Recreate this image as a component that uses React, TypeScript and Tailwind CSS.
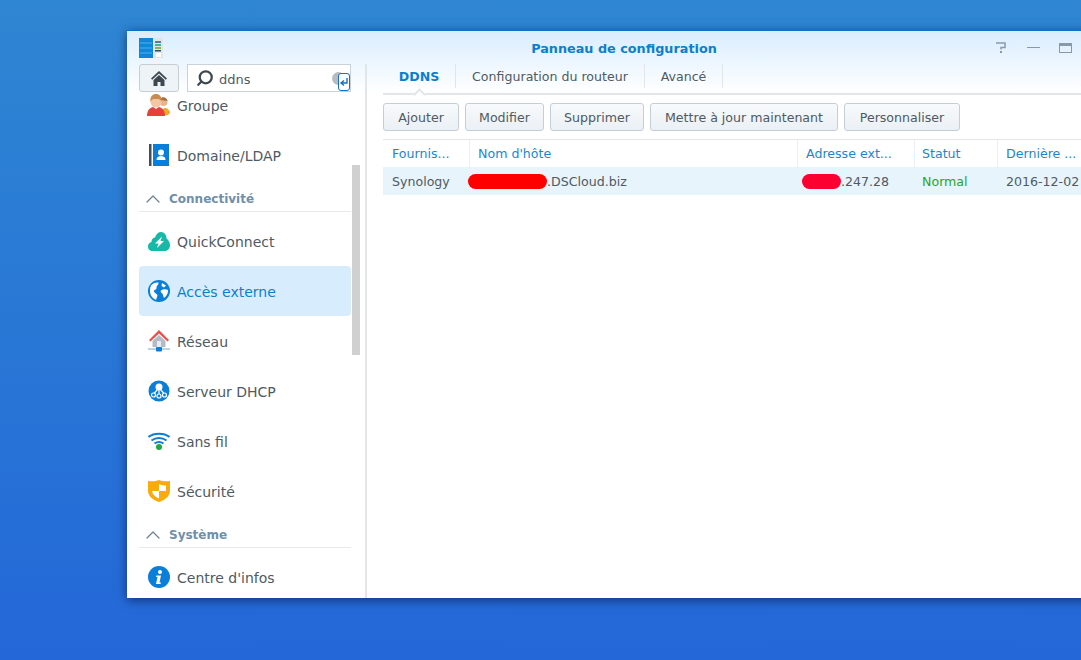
import { ChevronUp, Search } from "lucide-react";
import type { ReactNode } from "react";

const font = "font-['DejaVu_Sans','Liberation_Sans',sans-serif]";

function GroupIcon() {
  return (
    <svg viewBox="0 0 24 22" className="h-[22px] w-[24px]">
      <circle cx="16.500" cy="8" r="4" fill="#e8b48e" />
      <path d="M13 5c2-3 7-2 7.500 2-2-.5-5-.5-7.500-2z" fill="#a87038" />
      <path d="M15 21c0-4 1-7 3-7s5 2 5 5l-2 2z" fill="#eeaa20" />
      <circle cx="9" cy="8" r="5.500" fill="#f4c7a4" />
      <path d="M3.500 8C2.500 2.500 6 0 9 0s6.500 2.500 5.500 8c-1-2.500-2-3-5.500-3s-4.500.5-5.500 3z" fill="#c98c50" />
      <path d="M0 22c0-5 2-8 6-9l3 2 3-2c4 1 6 4 6 9z" fill="#e5403a" />
    </svg>
  );
}

function DomainIcon() {
  return (
    <svg viewBox="0 0 20 22" className="h-[22px] w-[20px]">
      <rect x="0" y="0" width="2.500" height="22" fill="#3f4f5f" />
      <rect x="4" y="0" width="16" height="22" fill="#0a7fd9" />
      <circle cx="12" cy="8.500" r="3" fill="#fff" />
      <path d="M7.500 16c0-3 2-4 4.500-4s4.500 1 4.500 4z" fill="#fff" />
    </svg>
  );
}

function CloudIcon() {
  return (
    <svg viewBox="0 0 22 19" className="h-[19px] w-[22px]">
      <path d="M4.500 19C1 19 0 16.500 0 14.500 0 12 1.500 10.500 3.500 10 3.500 6.500 6 5.500 7 5.500 8 2 10.500 0 13 0c3.500 0 5.500 3 5.500 6.500C20.500 8 22 10.500 22 13c0 3.500-2 6-5.500 6z" fill="#16b8a8" />
      <path d="M14 4.500l-7 7h3.500L9 16l7-7h-3.500z" fill="#fff" />
    </svg>
  );
}

function GlobeIcon() {
  return (
    <svg viewBox="0 0 22 22" className="h-[22px] w-[22px]">
      <circle cx="11" cy="11" r="11" fill="#0a7fd9" />
      <path d="M3 5.500C5 3 8 2 10.500 2.500c.5 2-2 3-2 5.500s-2.500 1-2.500 3 3 2.500 3.500 4.500L8 20C4.500 18.500 2 15 2 11c0-2 .3-4 1-5.500z" fill="#fff" />
      <path d="M13 10.500c2-1.500 5-1.500 7-.5.3 3-1.500 6.500-4 8-1-2-.8-3.500-1.800-4.500s-2.200-2-1.200-3z" fill="#fff" />
      <path d="M14 3l4 2.500-2 2-2.500-1.500z" fill="#fff" />
    </svg>
  );
}

function NetworkIcon() {
  return (
    <svg viewBox="0 0 22 22" className="h-[22px] w-[22px]">
      <path d="M11 0L1 10l1.500 1.500L11 3.500l8.500 8L21 10z" fill="#e8504a" />
      <path d="M4.500 11L11 5l6.500 6v6h-13z" fill="#b3bcc6" />
      <rect x="9" y="11" width="4" height="6" fill="#e9edf1" />
      <rect x="0" y="18.500" width="22" height="1" fill="#7fa8c8" />
      <rect x="8" y="17" width="6" height="4.500" rx="1" fill="#0a7fd9" />
    </svg>
  );
}

function DhcpIcon() {
  return (
    <svg viewBox="0 0 22 22" className="h-[22px] w-[22px]">
      <circle cx="11" cy="11" r="10.500" fill="#0a7fd9" />
      <circle cx="11" cy="7" r="3.500" fill="#fff" />
      <path d="M11 9v5M9.500 9.500L6 13.500M12.500 9.500L16 13.500" stroke="#fff" strokeWidth="1.200" />
      <circle cx="5.500" cy="15" r="2" fill="none" stroke="#fff" strokeWidth="1.200" />
      <circle cx="11" cy="16" r="2" fill="none" stroke="#fff" strokeWidth="1.200" />
      <circle cx="16.500" cy="15" r="2" fill="none" stroke="#fff" strokeWidth="1.200" />
    </svg>
  );
}

function WifiIcon() {
  return (
    <svg viewBox="0 0 22 18" className="h-[18px] w-[22px]">
      <path d="M.500 5C6 .5 16 .5 21.500 5M3.500 8.500c4.500-3.500 10.500-3.500 15 0M6.500 11.500c3-2 6-2 9 0" fill="none" stroke="#0a7fd9" strokeWidth="2" />
      <circle cx="11" cy="15" r="3" fill="#1fa83c" />
    </svg>
  );
}

function ShieldIcon() {
  return (
    <svg viewBox="0 0 22 22" className="h-[22px] w-[22px]">
      <path d="M0 1C4 1.500 8 1.500 11 0c3 1.500 7 1.500 11 1v10c0 5-5 9-11 11C5 20 0 16 0 11z" fill="#f9ab0c" />
      <path d="M11 4c2 1 5 1.500 7 1.500V11h-7zM11 11v7.500C7.500 17 4.500 14.500 4 11z" fill="#fff" />
    </svg>
  );
}

function InfoIcon() {
  return (
    <svg viewBox="0 0 22 22" className="h-[22px] w-[22px]">
      <circle cx="11" cy="11" r="11" fill="#0a7fd9" />
      <circle cx="12" cy="6" r="2" fill="#fff" />
      <path d="M8.500 9.500h4.500l-1.500 7h1.500l-.5 1.500H8l1.500-7H8z" fill="#fff" />
    </svg>
  );
}

function HomeIcon() {
  return (
    <svg viewBox="0 0 16 15" className="h-[15px] w-[16px]">
      <path d="M8 0L0 7.500l1.200 1.200L8 2.500l6.800 6.200L16 7.500z" fill="#3c4750" />
      <path d="M8 4l-5.500 5v6h4v-4h3v4h4V9z" fill="#3c4750" />
    </svg>
  );
}

function EnterIcon() {
  return (
    <svg viewBox="0 0 10 10" className="h-[10px] w-[10px]">
      <path d="M8 1v5H3M5 3.500L2 6l3 2.500" fill="none" stroke="#1a6fc0" strokeWidth="1.400" />
    </svg>
  );
}

function HelpIcon() {
  return (
    <svg viewBox="0 0 10 11" className="h-[11px] w-[10px]">
      <path d="M0 1h9v4.500H5v2" fill="none" stroke="#8a99a6" strokeWidth="1.500" />
      <rect x="4" y="9" width="2" height="2" fill="#8a99a6" />
    </svg>
  );
}

function AppLogo() {
  return (
    <svg viewBox="0 0 24 20" className="h-[20px] w-[24px]">
      <rect x="0" y="0" width="14" height="20" fill="#0f86d8" />
      <path d="M1 5h12M1 10h12M1 15h12" stroke="#4fb0ec" strokeWidth="1" />
      <rect x="14" y="0" width="10" height="20" fill="#dfe6ea" />
      <rect x="16" y="3" width="6" height="2" fill="#5b7d99" />
      <rect x="16" y="6" width="6" height="2" fill="#3fb5a0" />
      <rect x="16" y="9" width="6" height="2" fill="#7dbb4f" />
      <rect x="16" y="12" width="6" height="1.500" fill="#33495c" />
      <rect x="17" y="15" width="5" height="4" fill="#fff" />
    </svg>
  );
}

function NavItem({ icon, label, active }: { icon: ReactNode; label: string; active?: boolean }) {
  return (
    <div
      className={`flex h-[50px] items-center rounded-[4px] ${active ? "bg-[#d7ecfc] text-[#0a7fd0]" : "text-[#4f5a63]"}`}
    >
      <div className="flex w-[38px] shrink-0 justify-center pl-[2px]">{icon}</div>
      <span className="pt-[2px] text-[14px]">{label}</span>
    </div>
  );
}

function NavSection({ label }: { label: string }) {
  return (
    <div className="mb-[4px] flex h-[32px] items-center gap-[4px] border-b border-[#e6eaed] pl-[2px] pt-[7px]">
      <ChevronUp className="h-[24px] w-[24px] text-[#6f8394]" strokeWidth={1.300} />
      <span className="text-[12px] font-bold text-[#6f8fab]">{label}</span>
    </div>
  );
}

function ActionButton({ label, width }: { label: string; width: string }) {
  return (
    <button
      className={`h-[28px] rounded-[3px] border border-[#c6ced5] bg-gradient-to-b from-[#f8fafc] to-[#eaf0f5] pt-[2px] text-center text-[12.600px] text-[#4f5a63] ${width}`}
    >
      {label}
    </button>
  );
}

const columns = [
  { label: "Fournis...", cls: "w-[87px] pl-[9px]" },
  { label: "Nom d'hôte", cls: "w-[328px] pl-[8px]" },
  { label: "Adresse ext...", cls: "w-[117px] pl-[8px]" },
  { label: "Statut", cls: "w-[83px] pl-[7px]" },
  { label: "Dernière ...", cls: "w-[120px] pl-[8px]" },
];

export default function App() {
  return (
    <div
      className={`h-screen w-full overflow-hidden bg-gradient-to-b from-[#2f86d2] to-[#2467d8] pl-[127px] pt-[30px] ${font}`}
    >
      <div className="relative flex h-[568px] w-[1000px] flex-col border-t border-[#0f6fc4] bg-white shadow-[0_2px_10px_rgba(0,0,40,0.55)]">
        {/* Gradient behind title and tabs */}
        <div className="absolute inset-x-0 top-0 h-[62px] bg-gradient-to-b from-[#d9edfe] to-white" />

        {/* Title bar */}
        <div className="relative flex h-[33px] shrink-0 items-center pl-[12px]">
          <AppLogo />
          <div className="w-[917px] pl-[5px] pt-[3px] text-center text-[12.800px] font-bold text-[#0a7fd0]">
            Panneau de configuration
          </div>
          <div className="absolute left-[869px] top-[11px] flex items-center">
            <HelpIcon />
            <span className="ml-[21px] h-[1.500px] w-[13px] bg-[#8a99a6]" />
            <span className="ml-[19px] h-[10px] w-[13px] border border-t-[3px] border-[#8a99a6]" />
          </div>
        </div>

        <div className="relative flex min-h-0 flex-1">
          {/* Sidebar */}
          <aside className="relative flex w-[240px] shrink-0 flex-col border-r-2 border-[#e3e6e9] pl-[12px] pr-[14px]">
            <div className="relative z-10 flex h-[30px] shrink-0 gap-[8px]">
              <div className="flex h-[28px] w-[40px] items-center justify-center rounded-[3px] border border-[#c6ced5] bg-[#eef3f7]">
                <HomeIcon />
              </div>
              <div className="relative flex h-[28px] w-[164px] items-center border border-[#c9d2da] bg-white pl-[8px]">
                <Search className="h-[18px] w-[18px] -scale-x-100 text-[#3c4750]" strokeWidth={3} />
                <span className="ml-[5px] pt-[3px] text-[13px] text-[#4f5a63]">ddns</span>
                <span className="absolute right-[5px] top-[7px] h-[13px] w-[13px] rounded-full bg-[#b5bcc2]" />
                <span className="absolute right-0 top-[8px] flex h-[18px] w-[12px] items-center justify-center rounded-[3px] border border-[#1a6fc0] bg-white">
                  <EnterIcon />
                </span>
              </div>
            </div>
            <div className="min-h-0 flex-1 overflow-hidden">
              <div className="-mt-[14px]">
                <NavItem icon={<GroupIcon />} label="Groupe" />
                <NavItem icon={<DomainIcon />} label="Domaine/LDAP" />
                <NavSection label="Connectivité" />
                <NavItem icon={<CloudIcon />} label="QuickConnect" />
                <NavItem icon={<GlobeIcon />} label="Accès externe" active />
                <NavItem icon={<NetworkIcon />} label="Réseau" />
                <NavItem icon={<DhcpIcon />} label="Serveur DHCP" />
                <NavItem icon={<WifiIcon />} label="Sans fil" />
                <NavItem icon={<ShieldIcon />} label="Sécurité" />
                <NavSection label="Système" />
                <NavItem icon={<InfoIcon />} label="Centre d'infos" />
              </div>
            </div>
            {/* Scrollbar thumb */}
            <div className="absolute left-[225px] top-[101px] h-[190px] w-[8px] bg-[#d0d0d0]" />
          </aside>

          {/* Content */}
          <main className="flex min-w-0 flex-1 flex-col pl-[16px] text-[12.600px]">
            <div className="relative flex h-[31px] shrink-0 items-start border-b-2 border-[#e3e6e9]">
              <div className="flex h-[24px] w-[73px] items-center justify-center border-r border-[#e3e6e9] pt-[2px] font-bold text-[#0a7fd0]">
                DDNS
              </div>
              <div className="flex h-[24px] w-[189px] items-center justify-center border-r border-[#e3e6e9] pt-[2px] text-[#4f5a63]">
                Configuration du routeur
              </div>
              <div className="flex h-[24px] w-[78px] items-center justify-center border-r border-[#e3e6e9] pt-[2px] text-[#4f5a63]">
                Avancé
              </div>
              <span className="absolute bottom-[-6px] left-[32px] h-[9px] w-[9px] rotate-45 border-l-2 border-t-2 border-[#e3e6e9] bg-white" />
            </div>
            <div className="flex gap-[6px] pt-[8px]">
              <ActionButton label="Ajouter" width="w-[76px]" />
              <ActionButton label="Modifier" width="w-[79px]" />
              <ActionButton label="Supprimer" width="w-[94px]" />
              <ActionButton label="Mettre à jour maintenant" width="w-[188px]" />
              <ActionButton label="Personnaliser" width="w-[116px]" />
            </div>
            <div className="mt-[8px] flex h-[28px] w-[735px] items-center border-t border-[#e3e6e9]">
              {columns.map((col) => (
                <div
                  key={col.label}
                  className={`flex h-full shrink-0 items-center whitespace-nowrap border-r border-[#eceff1] pt-[2px] text-[#1a86d0] ${col.cls}`}
                >
                  {col.label}
                </div>
              ))}
            </div>
            <div className="flex h-[28px] w-[735px] items-center bg-[#e8f4fb] pt-[2px] text-[#4f5a63]">
              <div className="w-[86px] shrink-0 pl-[9px]">Synology</div>
              <div className="flex w-[328px] shrink-0 items-center whitespace-nowrap">
                <span className="ml-[-1px] h-[15px] w-[79px] rounded-full bg-[#fe0000]" />
                <span>.DSCloud.biz</span>
              </div>
              <div className="flex w-[117px] shrink-0 items-center whitespace-nowrap pl-[5px]">
                <span className="h-[15px] w-[39px] rounded-full bg-[#fb0031]" />
                <span>.247.28</span>
              </div>
              <div className="w-[84px] shrink-0 pl-[8px] text-[#29a329]">Normal</div>
              <div className="w-[120px] shrink-0 whitespace-nowrap pl-[8px]">2016-12-02</div>
            </div>
          </main>
        </div>
      </div>
    </div>
  );
}
